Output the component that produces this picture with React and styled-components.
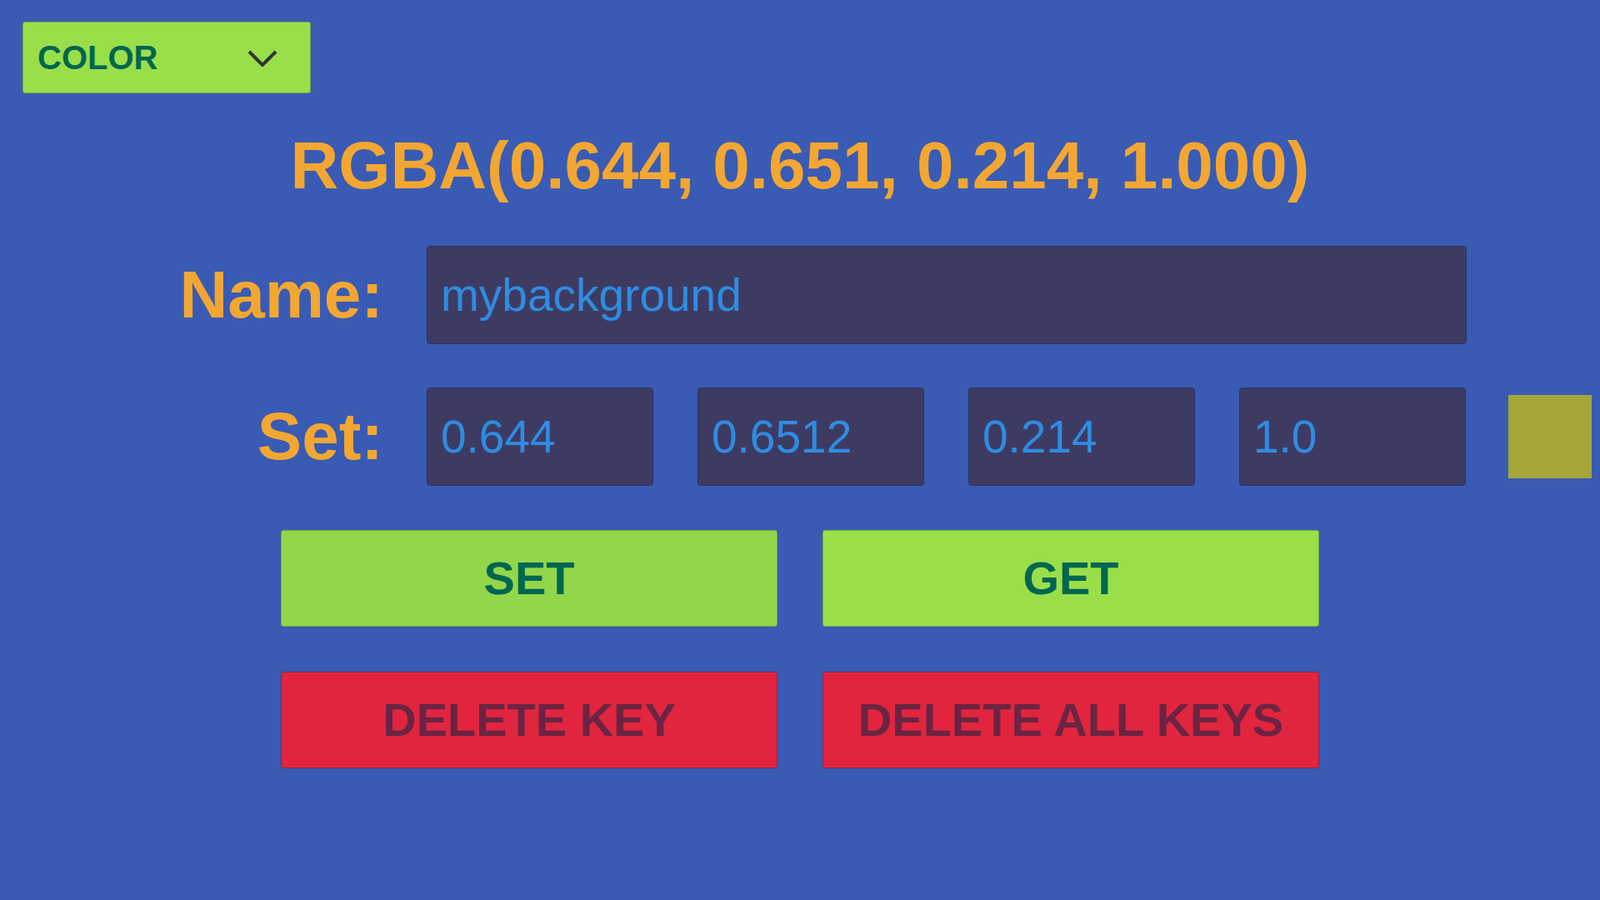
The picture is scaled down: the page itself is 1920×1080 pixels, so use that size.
import React from 'react'
import styled, { createGlobalStyle } from 'styled-components'

const GlobalStyle = createGlobalStyle`
  html, body {
    margin: 0;
    padding: 0;
    background-color: #395BB4;
    font-family: "Liberation Sans", Arial, sans-serif;
  }
  * {
    box-sizing: border-box;
  }
`

const Screen = styled.div`
  width: 1920px;
  height: 1080px;
  background-color: #395BB4;
  padding-top: 26px;
  overflow: hidden;
`

const Dropdown = styled.div`
  width: 346px;
  height: 86px;
  margin-left: 27px;
  background-color: #99DF4A;
  border: 1px solid #6FAE3A;
  border-radius: 3px;
  display: flex;
  align-items: center;
  justify-content: space-between;
  padding: 0 39px 0 17px;
  span {
    font-size: 40px;
    font-weight: bold;
    color: #00664F;
    line-height: 40px;
  }
  svg {
    margin-top: 2px;
  }
`

const Title = styled.h1`
  margin: 47px 0 0;
  font-size: 80px;
  line-height: 80px;
  font-weight: bold;
  color: #F3A732;
  text-align: center;
`

const Row = styled.div`
  display: flex;
  align-items: center;
  height: 118px;
  margin-top: ${p => p.gap}px;
`

const Label = styled.div`
  width: 460px;
  text-align: right;
  font-size: 80px;
  line-height: 80px;
  font-weight: bold;
  color: #F3A732;
`

const Fields = styled.div`
  margin-left: 52px;
  display: flex;
  gap: 53px;
  height: 100%;
`

const Field = styled.input`
  width: ${p => p.width}px;
  height: 118px;
  background-color: #3E3B63;
  border: 1px solid #2C3264;
  border-radius: 4px;
  padding: 0 16px;
  font-family: "Liberation Sans", Arial, sans-serif;
  font-size: 55px;
  line-height: 55px;
  color: #2E8DE2;
  outline: none;
`

const Swatch = styled.div`
  width: 100px;
  height: 100px;
  margin-left: 51px;
  background-color: ${p => p.color};
`

const ButtonGrid = styled.div`
  display: grid;
  grid-template-columns: 596px 596px;
  column-gap: 54px;
  row-gap: 54px;
  justify-content: center;
  margin-top: 53px;
`

const Button = styled.div`
  height: 116px;
  display: flex;
  align-items: center;
  justify-content: center;
  border-radius: 3px;
  font-size: 56px;
  line-height: 56px;
  font-weight: bold;
  background-color: ${p => p.bg};
  border: 1px solid ${p => p.border};
  color: ${p => p.fg};
`

const values = ['0.644', '0.6512', '0.214', '1.0']
const rgb = [0.644, 0.651, 0.214]

const green = { bg: '#9ADF4A', border: '#6FAE3A', fg: '#00664F' }
const red = { bg: '#E2253E', border: '#8E2248', fg: '#6B2443' }

export default function App() {
  const swatch = `rgb(${rgb.map(v => Math.round(v * 255)).join(',')})`
  return (
    <Screen>
      <GlobalStyle />
      <Dropdown>
        <span>COLOR</span>
        <svg width="36" height="20" viewBox="0 0 36 20">
          <polyline points="2,2 18,18 34,2" fill="none" stroke="#333333" strokeWidth="4" />
        </svg>
      </Dropdown>
      <Title>RGBA(0.644, 0.651, 0.214, 1.000)</Title>
      <Row gap={56}>
        <Label>Name:</Label>
        <Fields>
          <Field width={1248} defaultValue="mybackground" />
        </Fields>
      </Row>
      <Row gap={52}>
        <Label>Set:</Label>
        <Fields>
          {values.map(v => (
            <Field key={v} width={272} defaultValue={v} />
          ))}
        </Fields>
        <Swatch color={swatch} />
      </Row>
      <ButtonGrid>
        <Button {...green} bg="#92D64A">SET</Button>
        <Button {...green}>GET</Button>
        <Button {...red}>DELETE KEY</Button>
        <Button {...red}>DELETE ALL KEYS</Button>
      </ButtonGrid>
    </Screen>
  )
}
